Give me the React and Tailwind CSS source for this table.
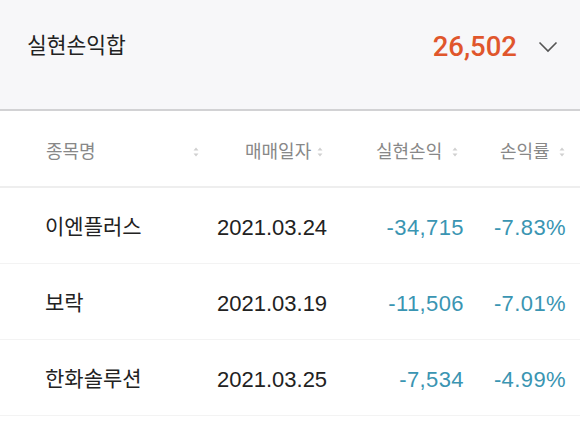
const KR = { fontFamily: '"Liberation Sans", "Noto Sans CJK KR", sans-serif' };

const rows = [
  { name: "이엔플러스", date: "2021.03.24", pl: "-34,715", rate: "-7.83%" },
  { name: "보락", date: "2021.03.19", pl: "-11,506", rate: "-7.01%" },
  { name: "한화솔루션", date: "2021.03.25", pl: "-7,534", rate: "-4.99%" },
];

function SortIcon() {
  return (
    <svg width="8" height="12" viewBox="0 0 8 12" className="shrink-0">
      <path d="M4 1.5 L6.5 4.5 H1.5 Z" fill="#d0d0d0" />
      <path d="M4 10.5 L6.5 7.5 H1.5 Z" fill="#d0d0d0" />
    </svg>
  );
}

export default function App() {
  return (
    <div className="w-[580px] h-[426px] overflow-hidden bg-white" style={KR}>
      {/* summary */}
      <div className="h-[111px] bg-[#f7f7f9] border-b-2 border-[#d2d2d4] flex items-center pl-[27px] pr-[22px] pb-[16px]">
        <span className="text-[21.5px] text-[#222]">실현손익합</span>
        <span className="ml-auto font-['Roboto',sans-serif] font-medium text-[27.5px] text-[#e0562c]">26,502</span>
        <svg width="20" height="12" viewBox="0 0 20 12" className="ml-[21px]">
          <path d="M1.5 1.5 L10 10 L18.5 1.5" fill="none" stroke="#555" strokeWidth="1.6" />
        </svg>
      </div>

      {/* table head */}
      <div className="h-[77px] border-b-2 border-[#eeeeee] flex items-center pt-[7px] text-[18px] text-[#888] whitespace-nowrap">
        <div className="w-[205px] pl-[46px] pr-[5px] flex items-center justify-between">
          <span>종목명</span>
          <SortIcon />
        </div>
        <div className="w-[126px] pl-[40px] flex items-center gap-[5px]">
          <span>매매일자</span>
          <SortIcon />
        </div>
        <div className="w-[124px] pl-[45px] flex items-center gap-[9px]">
          <span>실현손익</span>
          <SortIcon />
        </div>
        <div className="flex-1 pl-[45px] flex items-center gap-[8px]">
          <span>손익률</span>
          <SortIcon />
        </div>
      </div>

      {/* rows */}
      {rows.map((r) => (
        <div key={r.name} className="h-[76px] border-b border-[#f3f3f3] flex items-center pt-[3px] whitespace-nowrap">
          <div className="w-[217px] pl-[45px] text-[21px] text-[#222]">{r.name}</div>
          <div className="w-[115px] text-[22px] text-[#222]">{r.date}</div>
          <div className="w-[132px] text-right text-[22px] tracking-[0.4px] text-[#3a95b2]">{r.pl}</div>
          <div className="w-[102px] text-right text-[22px] tracking-[0.4px] text-[#3a95b2]">{r.rate}</div>
        </div>
      ))}
    </div>
  );
}
